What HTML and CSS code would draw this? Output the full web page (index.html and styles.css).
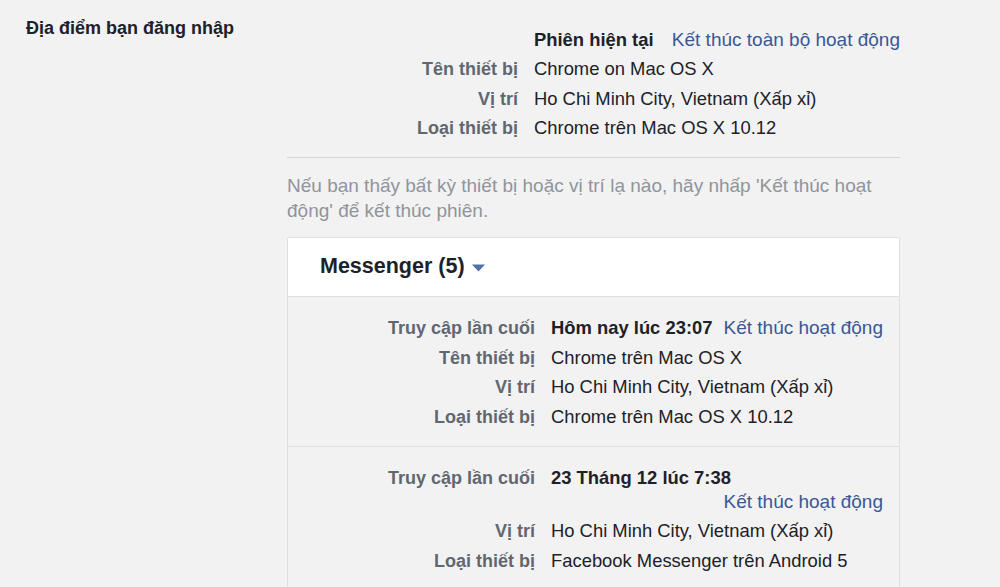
FILE: index.html
```html
<!DOCTYPE html>
<html lang="vi">
<head>
<meta charset="utf-8">
<title>Địa điểm bạn đăng nhập</title>
<link rel="stylesheet" href="styles.css">
</head>
<body>
<div class="page">
  <div class="title">Địa điểm bạn đăng nhập</div>
  <div class="content">
    <div class="current">
      <div class="row">
        <div class="label"></div>
        <div class="value flow"><span class="strong">Phiên hiện tại</span><a class="link" href="#">Kết thúc toàn bộ hoạt động</a></div>
      </div>
      <div class="row">
        <div class="label">Tên thiết bị</div>
        <div class="value">Chrome on Mac OS X</div>
      </div>
      <div class="row">
        <div class="label">Vị trí</div>
        <div class="value">Ho Chi Minh City, Vietnam (Xấp xỉ)</div>
      </div>
      <div class="row">
        <div class="label">Loại thiết bị</div>
        <div class="value">Chrome trên Mac OS X 10.12</div>
      </div>
    </div>
    <p class="note">Nếu bạn thấy bất kỳ thiết bị hoặc vị trí lạ nào, hãy nhấp 'Kết thúc hoạt động' để kết thúc phiên.</p>
    <div class="card">
      <div class="card-head">
        <span class="card-title">Messenger (5)</span>
        <svg class="caret" width="14" height="8" viewBox="0 0 14 8"><path d="M0 0.5 L13 0.5 L6.5 7.5 Z" fill="#5572a8"/></svg>
      </div>
      <div class="session">
        <div class="row">
          <div class="label">Truy cập lần cuối</div>
          <div class="value flow"><span class="strong">Hôm nay lúc 23:07</span><a class="link" href="#">Kết thúc hoạt động</a></div>
        </div>
        <div class="row">
          <div class="label">Tên thiết bị</div>
          <div class="value">Chrome trên Mac OS X</div>
        </div>
        <div class="row">
          <div class="label">Vị trí</div>
          <div class="value">Ho Chi Minh City, Vietnam (Xấp xỉ)</div>
        </div>
        <div class="row">
          <div class="label">Loại thiết bị</div>
          <div class="value">Chrome trên Mac OS X 10.12</div>
        </div>
      </div>
      <div class="session">
        <div class="row">
          <div class="label">Truy cập lần cuối</div>
          <div class="value flow"><span class="strong">23 Tháng 12 lúc 7:38</span><a class="link" href="#">Kết thúc hoạt động</a></div>
        </div>
        <div class="row">
          <div class="label">Vị trí</div>
          <div class="value">Ho Chi Minh City, Vietnam (Xấp xỉ)</div>
        </div>
        <div class="row">
          <div class="label">Loại thiết bị</div>
          <div class="value">Facebook Messenger trên Android 5</div>
        </div>
      </div>
    </div>
  </div>
</div>
</body>
</html>
```

FILE: styles.css
```css
html, body {
  margin: 0;
  padding: 0;
  background: #f2f2f2;
  height: 100%;
  overflow: hidden;
}
body {
  font-family: "Liberation Sans", Arial, sans-serif;
  color: #1d2129;
  font-size: 18px;
}
.page {
  display: grid;
  grid-template-columns: 261px 613px;
  padding: 16px 0 0 26px;
}
.title {
  font-size: 18px;
  font-weight: 700;
  line-height: 24px;
  color: #1d2129;
}
.content {
  padding-top: 12px;
}
.current {
  display: flex;
  flex-direction: column;
  gap: 5.33px;
  padding-bottom: 17px;
  border-bottom: 1px solid #d3d6db;
}
.row {
  display: grid;
  grid-template-columns: 231px 1fr;
  column-gap: 16px;
  line-height: 24px;
}
.label {
  text-align: right;
  font-weight: 700;
  color: #606770;
}
.value {
  color: #1d2129;
  font-size: 18.4px;
}
.flow {
  display: flex;
  flex-wrap: wrap;
  column-gap: 6px;
}
.strong {
  font-weight: 700;
}
.link {
  margin-left: auto;
  color: #385898;
  text-decoration: none;
  font-size: 19px;
}
.note {
  margin: 15px 0 14px;
  color: #90949c;
  font-size: 19px;
  line-height: 25px;
  padding-right: 20px;
}
.card {
  border: 1px solid #dddfe2;
  border-radius: 2px;
}
.card-head {
  background: #ffffff;
  height: 58px;
  padding-left: 32px;
  display: flex;
  align-items: center;
  gap: 7px;
  border-bottom: 1px solid #dddfe2;
}
.card-title {
  font-size: 21.5px;
  font-weight: 700;
  color: #1d2129;
}
.caret {
  margin-top: 3px;
}
.session {
  display: flex;
  flex-direction: column;
  gap: 5.6px;
  padding: 19px 16px 17px 16px;
  border-bottom: 1px solid #dddfe2;
}
```
